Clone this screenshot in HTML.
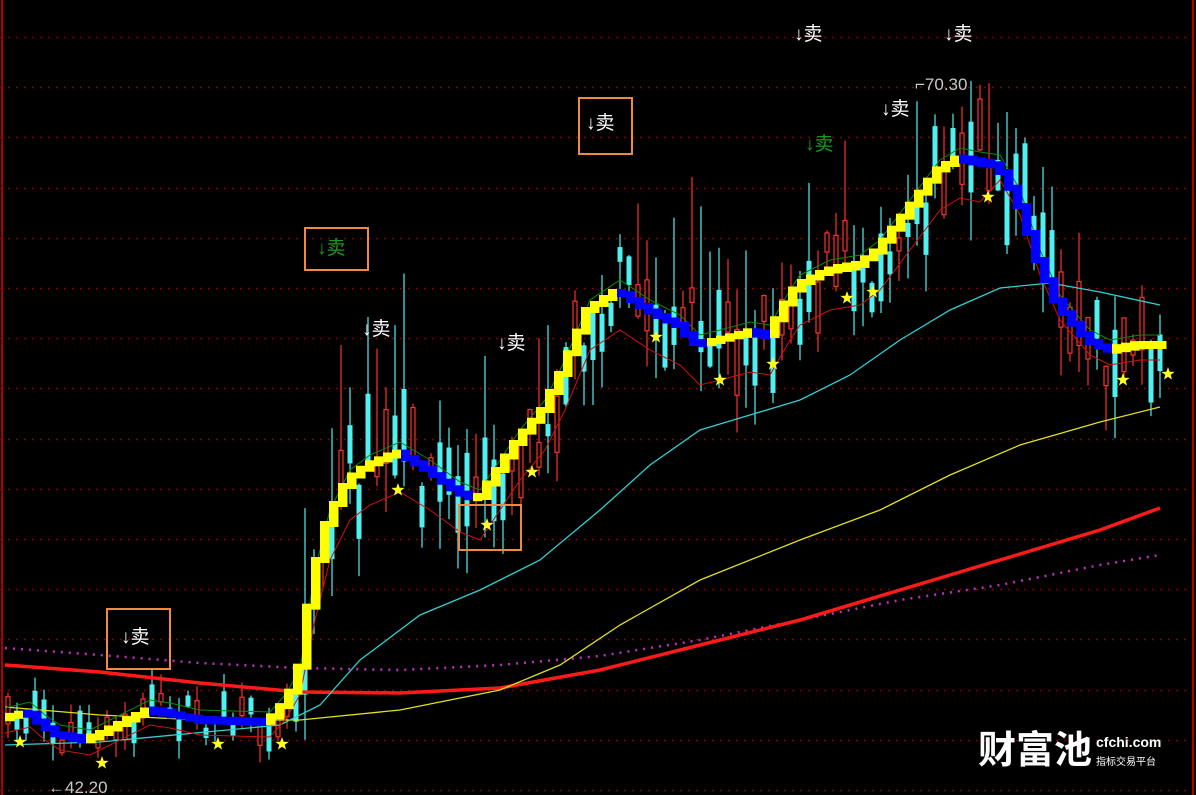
<!DOCTYPE html>
<html><head><meta charset="utf-8"><style>
html,body{margin:0;padding:0;background:#000;width:1196px;height:795px;overflow:hidden}
svg{display:block}
text{font-family:"Liberation Sans","Noto Sans CJK SC",sans-serif}
</style></head><body>
<svg id="s" width="1196" height="795" xmlns="http://www.w3.org/2000/svg">
<rect width="1196" height="795" fill="#000"/>
<g id="grid"></g>
<g id="candles"></g>
<g id="lines"></g>
<g id="band"></g>
<g id="stars"></g>
<line x1="2" y1="0" x2="2" y2="795" stroke="#a00" stroke-width="2"/>
<line x1="1193" y1="0" x2="1193" y2="795" stroke="#a00" stroke-width="2"/>
<g fill="#fff" font-size="19">
<text x="794" y="40">↓卖</text><text x="944" y="40">↓卖</text>
<text x="881" y="115">↓卖</text><text x="586" y="129">↓卖</text>
<text x="121" y="643">↓卖</text><text x="362" y="335">↓卖</text>
<text x="497" y="349">↓卖</text>
</g>
<g fill="#1a9a1a" font-size="19"><text x="317" y="254">↓卖</text><text x="805" y="150">↓卖</text></g>
<g fill="none" stroke="#f08a3c" stroke-width="2">
<rect x="579" y="98" width="53" height="56"/><rect x="305" y="228" width="63" height="42"/>
<rect x="107" y="609" width="63" height="60"/><rect x="459" y="505" width="62" height="45"/>
</g>
<text x="48" y="793" fill="#c8c8c8" font-size="17">←42.20</text>
<text x="915" y="90" fill="#c8c8c8" font-size="17">⌐70.30</text>
<text x="978" y="763" fill="#fff" font-size="38" font-weight="bold" font-family="Noto Sans CJK SC,sans-serif">财富池</text>
<text x="1096" y="747" fill="#fff" font-size="14" font-weight="bold">cfchi.com</text>
<text x="1096" y="765" fill="#fff" font-size="10" font-family="Noto Sans CJK SC,sans-serif">指标交易平台</text>
</svg>
<script>
(function(){
var NS="http://www.w3.org/2000/svg";
function el(p,t,a){var e=document.createElementNS(NS,t);for(var k in a)e.setAttribute(k,a[k]);document.getElementById(p).appendChild(e);return e;}
for(var gy=37;gy<795;gy+=50.2){el("grid","line",{x1:0,x2:1196,y1:Math.round(gy)+.5,y2:Math.round(gy)+.5,stroke:"#8a0000","stroke-dasharray":"2,6","stroke-width":1.5});}
function interp(pts,x){for(var i=1;i<pts.length;i++){if(x<=pts[i][0]){var a=pts[i-1],b=pts[i];return a[1]+(b[1]-a[1])*(x-a[0])/(b[0]-a[0]);}}return pts[pts.length-1][1];}
var band=[[5,718],[30,712],[45,725],[60,735],[90,740],[110,730],[150,710],[170,713],[200,720],[270,722],[285,705],[300,680],[315,580],[330,520],[350,480],[370,465],[400,452],[430,470],[460,492],[480,500],[500,470],[520,440],[545,410],[565,370],[590,310],[620,290],[650,310],[680,325],[700,345],[720,340],[750,332],[770,335],[790,300],[800,285],[830,270],[860,265],[880,250],[910,210],[940,170],[960,158],[980,162],[1000,165],[1020,200],[1040,260],[1060,305],[1090,340],[1110,350],[1140,345],[1160,345]];
var cyan=[[5,745],[100,742],[280,725],[320,705],[360,660],[420,615],[480,590],[540,560],[600,510],[650,465],[700,430],[750,415],[800,400],[850,375],[900,340],[950,310],[1000,288],[1050,283],[1100,292],[1160,305]];
var yel=[[5,707],[100,715],[200,720],[300,720],[400,710],[500,690],[560,665],[620,625],[700,580],[800,540],[880,510],[950,475],[1020,445],[1100,422],[1160,407]];
var tr=[[5,665],[100,672],[200,683],[300,692],[400,693],[500,688],[600,670],[700,645],[800,620],[900,590],[1000,560],[1100,530],[1160,508]];
var mg=[[5,648],[100,655],[200,663],[300,668],[400,670],[500,665],[600,656],[700,640],[800,620],[900,600],[1000,585],[1100,565],[1160,555]];
var seed=7;function rnd(){seed=(seed*16807)%2147483647;return seed/2147483647;}
for(var x=8;x<1162;x+=9){var b=interp(band,x);var up=rnd()<0.5;var vol=x>290?1.4:0.55;
var h=(8+rnd()*45)*vol,o=(rnd()-0.5)*60*vol;var ct=b+o-h/2,cb=b+o+h/2;var wt=ct-rnd()*35*vol,wb=cb+rnd()*35*vol;
if(x>290&&x<1010&&rnd()<0.25){wt-=70;}
var c=up?"#ff3030":"#50f0f0";
el("candles","line",{x1:x,x2:x,y1:wt,y2:wb,stroke:c,"stroke-width":1.2});
if(up)el("candles","rect",{x:x-2,y:ct,width:4,height:Math.max(h,2),fill:"#000",stroke:c,"stroke-width":1.2});
else el("candles","rect",{x:x-2.5,y:ct,width:5,height:Math.max(h,2),fill:c});}
function pl(pts,c,w,d){var s=pts.map(function(p){return p.join(",")}).join(" ");var a={points:s,fill:"none",stroke:c,"stroke-width":w};if(d)a["stroke-dasharray"]=d;el("lines","polyline",a);}
pl(mg,"#c030c0",2.5,"2,6");pl(tr,"#ff1a1a",3.5);pl(yel,"#e0e020",1.3);pl(cyan,"#30d0d0",1.3);
var rp=band.map(function(p){return [p[0],p[1]+(p[0]>300&&p[0]<1000?40:15)]});pl(rp,"#d01010",1);
var gp=band.map(function(p){return [p[0],p[1]-10]});pl(gp,"#0a8a0a",1);
var prev=interp(band,4);
for(var bx=5;bx<1160;bx+=9){var v=interp(band,bx+9);var t=Math.min(prev,v)-3,bt=Math.max(prev,v)+3;if(bt-t<8){t-=1;bt+=1;}
el("band","rect",{x:bx,y:t,width:9.5,height:bt-t,fill:v<=prev?"#ffff00":"#0000ff"});prev=v;}
var st=[[20,742],[102,763],[218,744],[282,744],[398,490],[487,525],[532,472],[656,337],[720,380],[773,364],[847,298],[873,292],[988,197],[1123,380],[1168,374]];
st.forEach(function(p){var s="";for(var i=0;i<10;i++){var r=i%2?2.8:7,a=Math.PI/5*i-Math.PI/2;s+=(p[0]+r*Math.cos(a))+","+(p[1]+r*Math.sin(a))+" ";}el("stars","polygon",{points:s,fill:"#ffff20"});});
})();
</script>
</body></html>
